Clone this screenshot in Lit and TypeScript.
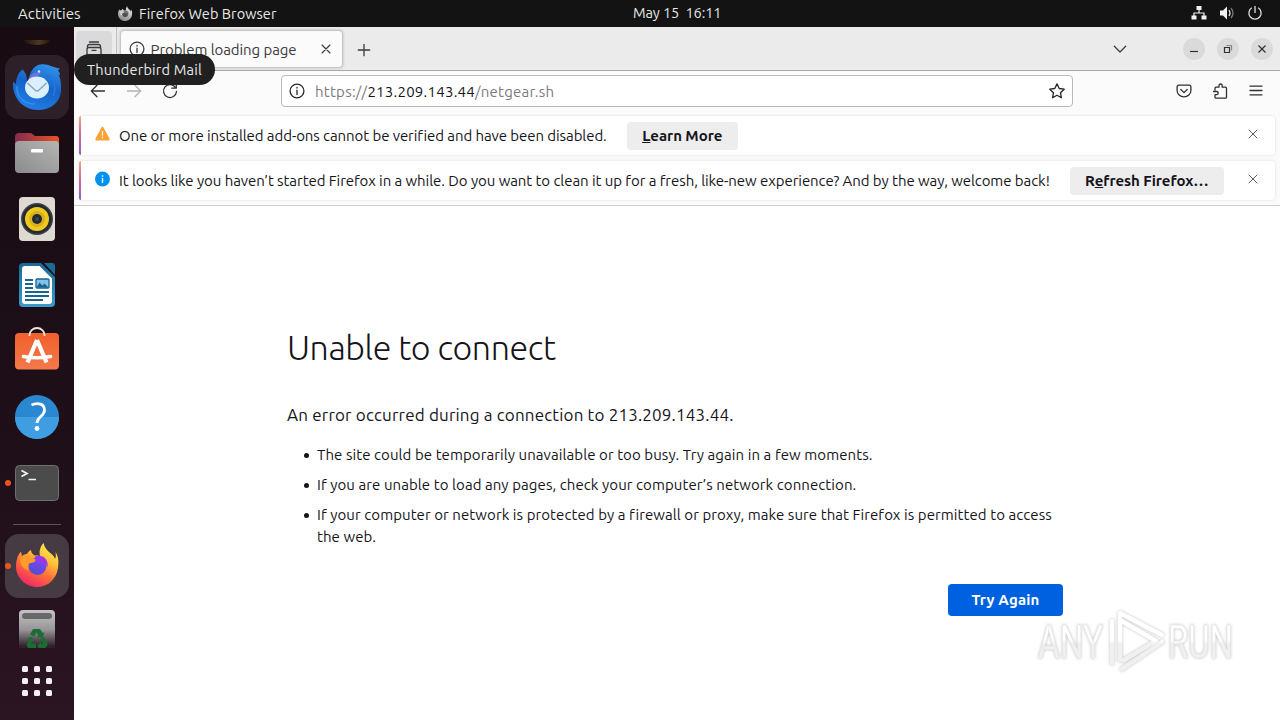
import { LitElement, html, css, svg } from 'lit'
import { customElement, property } from 'lit/decorators.js'

const icons: Record<string, unknown> = {
  tabs: svg`<path d="M3.500 1h9M1.500 7V5.500q0-2 2-2h9q2 0 2 2V7" /><path d="M1 13V8.500q0-2 2-2h10q2 0 2 2V13q0 2-2 2H3q-2 0-2-2z" /><path d="M6 9.300h4" />`,
  info: svg`<circle cx="8" cy="8" r="6.900" /><path d="M8 7.200v4.300M8 4.300v.8" />`,
  close: svg`<path d="M4 4l8 8M12 4l-8 8" />`,
  plus: svg`<path d="M8 2.300v11.400M2.300 8h11.400" />`,
  chevron: svg`<path d="M2.300 5.300L8 11l5.700-5.700" />`,
  back: svg`<path d="M14.500 8H1.500M7 2.300L1.300 8 7 13.700" />`,
  forward: svg`<path d="M1.500 8h13M9 2.300L14.700 8 9 13.700" />`,
  reload: svg`<path d="M13.500 4.500A6.500 6.500 0 1 0 14.500 8.500M14.300 .8v4.400H9.800" />`,
  star: svg`<path d="M8 .9l2.200 4.600 5 .7-3.700 3.500.9 5L8 12.300l-4.400 2.400.9-5L.8 6.200l5-.7z" />`,
  pocket: svg`<path d="M2.800 2.200h10.400a1.700 1.700 0 0 1 1.700 1.700v3.600a6.900 6.400 0 0 1-13.800 0V3.900a1.700 1.700 0 0 1 1.700-1.700zM4.800 6.500L8 9.600l3.200-3.100" />`,
  puzzle: svg`<path d="M3 7V5.200a1 1 0 0 1 1-1h3V2.600a1.600 1.600 0 0 1 3.200 0v1.600h3.300a1 1 0 0 1 1 1v9a1 1 0 0 1-1 1H4a1 1 0 0 1-1-1v-2.500h1.600a1.600 1.600 0 0 0 0-3.200H1.500" />`,
  menu: svg`<path d="M2 3.200h12M2 7.500h12M2 11.800h12" />`,
}

/** Stroked 16px toolbar glyph */
@customElement('line-icon')
export class LineIcon extends LitElement {
  @property({ type: String }) name: string = ''

  static styles = css`
    :host {
      display: block;
      flex: none;
      width: 16px;
      height: 16px;
    }

    svg {
      display: block;
      width: 100%;
      height: 100%;
      fill: none;
      stroke: currentColor;
      stroke-width: var(--icon-stroke, 1.3);
      stroke-linecap: round;
      stroke-linejoin: round;
    }
  `

  render() {
    return html`<svg viewBox="0 0 16 16">${icons[this.name]}</svg>`
  }
}

/** Notification row with a gradient edge */
@customElement('notification-row')
export class NotificationRow extends LitElement {
  @property({ type: String }) kind: string = 'info'

  static styles = css`
    :host {
      display: flex;
      align-items: center;
      position: relative;
      box-sizing: border-box;
      height: 39px;
      padding: 0 14px 0 16px;
      background: #fff;
      border-radius: 3px;
      box-shadow: 0 0 3px rgba(0, 0, 0, 0.12);
      font-size: 15px;
      color: #15141a;
    }

    .edge {
      position: absolute;
      left: 0;
      top: 0;
      bottom: 0;
      width: 2px;
      border-radius: 3px 0 0 3px;
      background: linear-gradient(#f0a878, #cf6a9a 45%, #8b62c0);
    }

    .badge {
      width: 16px;
      height: 16px;
      margin: 0 8px 3px 0;
    }

    line-icon {
      --icon-stroke: 1;
      margin: 0 0 4px auto;
      color: #5b5b66;
    }
  `

  render() {
    return html`
      <div class="edge"></div>
      <svg class="badge" viewBox="0 0 16 16">
        ${this.kind === 'warning'
          ? svg`<path d="M7.500 2L13.500 13.300H1.500z" fill="#f9a335" stroke="#f9a335" stroke-width="2.400" stroke-linejoin="round" /><path d="M7.500 5v4.500M7.500 10.800v1.400" stroke="#fff" stroke-width="1.200" />`
          : svg`<circle cx="7.500" cy="8" r="7.500" fill="#0090ed" /><path d="M7.500 7v5M7.500 4.200v1.500" stroke="#fff" stroke-width="1.400" />`}
      </svg>
      <slot></slot>
      <line-icon name="close"></line-icon>
    `
  }
}

@customElement('app-root')
export class AppRoot extends LitElement {
  static styles = css`
    :host {
      display: flex;
      flex-direction: column;
      position: relative;
      width: 1280px;
      height: 720px;
      overflow: hidden;
      background: #fff;
      color: #15141a;
      font: 15px Ubuntu, 'Noto Sans', 'Open Sans', sans-serif;
      white-space: nowrap;
    }

    .topbar {
      display: flex;
      align-items: center;
      flex: none;
      height: 27px;
      background: #131313;
      color: #e8e8e8;
      font-size: 14.5px;
    }

    .topbar .left {
      display: flex;
      align-items: center;
      box-sizing: border-box;
      width: 633px;
      padding-left: 18px;
    }

    .activities {
      width: 99px;
      font-size: 15px;
      letter-spacing: 0.12px;
    }

    .appname {
      margin-left: 6px;
      letter-spacing: 0.06px;
    }

    .clock {
      margin-bottom: 2px;
      letter-spacing: -0.1px;
      white-space: pre;
    }

    .status {
      display: flex;
      align-items: center;
      gap: 12px;
      margin: 0 17px 1px auto;
    }

    .body {
      display: flex;
      flex: 1;
      min-height: 0;
    }

    .dock {
      display: flex;
      flex-direction: column;
      align-items: center;
      flex: none;
      width: 74px;
      background: linear-gradient(#180b12, #1e0f18 60%, #2b1522);
    }

    .sliver {
      flex: none;
      width: 26px;
      height: 5px;
      margin: 13px 0 10px;
      border-radius: 0 0 13px 13px / 0 0 5px 5px;
      background: linear-gradient(90deg, #271013, #4b3a20 60%, #251310);
    }

    .item {
      display: flex;
      align-items: center;
      justify-content: center;
      position: relative;
      flex: none;
      width: 64px;
      height: 64px;
      margin-bottom: 2px;
      border-radius: 14px;
    }

    .item svg {
      width: 48px;
      height: 48px;
      overflow: visible;
    }

    .item.hover {
      background: #2d2028;
    }

    .item.active {
      background: #463b42;
    }

    .item.running::before {
      content: '';
      position: absolute;
      left: 0;
      top: 29px;
      width: 6px;
      height: 6px;
      border-radius: 50%;
      background: #e95420;
    }

    .separator {
      flex: none;
      width: 48px;
      height: 1px;
      margin: 7px 0 9px;
      background: #5c5157;
    }

    .item.trash {
      align-items: flex-start;
      height: 48px;
      margin: 0;
      overflow: hidden;
      border-radius: 0;
    }

    .item.trash svg {
      flex: none;
      margin-top: 8px;
    }

    .apps {
      display: grid;
      grid-template-columns: repeat(3, 6px);
      gap: 6px;
      margin-top: 18px;
    }

    .apps i {
      height: 6px;
      border-radius: 1.5px;
      background: #f6f0f4;
    }

    .browser {
      display: flex;
      flex-direction: column;
      flex: 1;
      min-width: 0;
    }

    .tabstrip {
      display: flex;
      align-items: center;
      box-sizing: border-box;
      height: 44px;
      flex: none;
      padding: 0 7px 0 2px;
      background: #ebebeb;
      border-bottom: 1px solid #a8a8a8;
      color: #3a3a40;
    }

    .firefox-view {
      display: flex;
      justify-content: center;
      align-items: center;
      width: 36px;
      height: 36px;
      border-radius: 4px;
      background: #dadada;
    }

    .divider {
      width: 1px;
      height: 43px;
      margin: 0 3px 0 4px;
      background: #bebebe;
    }

    .tab {
      display: flex;
      align-items: center;
      box-sizing: border-box;
      width: 223px;
      height: 38px;
      padding: 0 8px;
      border: 1px solid #c6c6c8;
      border-radius: 4px;
      background: #fbfbfb;
      box-shadow: 0 0 3px rgba(0, 0, 0, 0.2);
      font-size: 15px;
    }

    .tab span {
      flex: 1;
      margin: 2px 0 0 5.5px;
      letter-spacing: -0.08px;
    }

    .tab line-icon:last-child {
      --icon-stroke: 1.1;
    }

    .tab + line-icon {
      margin: 2px 0 0 13px;
    }

    .spacer {
      flex: 1;
    }

    .controls {
      display: flex;
      gap: 12px;
      margin-left: 55px;
    }

    .controls span {
      display: flex;
      align-items: center;
      justify-content: center;
      width: 22px;
      height: 22px;
      border-radius: 50%;
      background: #dadada;
    }

    .controls svg {
      width: 10px;
      height: 10px;
      fill: none;
      stroke: #303030;
      stroke-width: 1.2;
    }

    .navbar {
      display: flex;
      align-items: center;
      flex: none;
      box-sizing: border-box;
      height: 42px;
      padding: 0 16px 2px;
      background: #fbfbfb;
      color: #303036;
    }

    .navbar .back,
    .navbar .forward {
      margin-right: 20px;
    }

    .navbar .forward {
      color: #b4b4b6;
    }

    .urlbar {
      display: flex;
      align-items: center;
      box-sizing: border-box;
      width: 792px;
      height: 32px;
      margin: 0 103px;
      padding: 0 7px;
      border: 1px solid #bababd;
      border-radius: 4px;
      background: #fff;
      color: #7b7b80;
      font-size: 15px;
    }

    .urlbar line-icon {
      color: #25252b;
    }

    .urlbar span {
      flex: 1;
      margin-left: 10px;
      letter-spacing: 0.25px;
    }

    .urlbar b {
      font-weight: 400;
      color: #15141a;
    }

    .right {
      display: flex;
      gap: 20px;
    }

    .notifications {
      display: flex;
      flex-direction: column;
      gap: 6px;
      flex: none;
      box-sizing: border-box;
      height: 93px;
      padding: 3px 5px 0;
      background: #fbfbfb;
      border-bottom: 1px solid #cbcbcd;
    }

    .warn-text {
      letter-spacing: -0.078px;
    }

    .info-text {
      letter-spacing: -0.062px;
    }

    .action {
      display: flex;
      align-items: center;
      justify-content: center;
      height: 28px;
      margin-left: 20px;
      border-radius: 4px;
      background: #ededee;
      font-weight: 700;
      white-space: pre;
    }

    .learn {
      width: 111px;
      letter-spacing: -0.05px;
    }

    .refresh {
      width: 154px;
      letter-spacing: -0.05px;
    }

    .page {
      display: flex;
      flex-direction: column;
      flex: 1;
      width: 776px;
      padding: 118px 0 0 213px;
    }

    h1 {
      margin: 0;
      font-size: 34px;
      font-weight: 300;
      line-height: 46px;
      letter-spacing: -0.43px;
    }

    p {
      margin: 33px 0 0;
      font-size: 17px;
      line-height: 24px;
      letter-spacing: 0.18px;
    }

    ul {
      margin: 17px 0 0;
      padding-left: 30px;
      line-height: 22px;
      letter-spacing: 0.078px;
      list-style: none;
    }

    li {
      position: relative;
      margin-bottom: 8px;
    }

    li::before {
      content: '';
      position: absolute;
      left: -13px;
      top: 9px;
      width: 5px;
      height: 5px;
      border-radius: 50%;
      background: #15141a;
    }

    .retry {
      align-self: flex-end;
      width: 115px;
      margin-top: 28px;
      border-radius: 4px;
      background: #0061e0;
      color: #fff;
      font-weight: 700;
      line-height: 32px;
      letter-spacing: 0.15px;
      text-align: center;
    }

    .tooltip {
      position: absolute;
      left: 74px;
      top: 54px;
      box-sizing: border-box;
      width: 141px;
      height: 31px;
      border-radius: 16px;
      background: #202020;
      color: #e9e9e9;
      font-size: 14.5px;
      line-height: 31px;
      letter-spacing: 0.22px;
      text-align: center;
    }

    .watermark {
      position: absolute;
      left: 1032px;
      top: 604px;
      width: 240px;
      height: 72px;
      filter: drop-shadow(0 0 1.5px rgba(0, 0, 0, 0.25));
    }
  `

  renderFirefox(id: string, mono = false) {
    return svg`
      <defs>
        <linearGradient id="${id}-body" x1=".85" y1="0" x2=".3" y2="1">
          <stop offset="0" stop-color=${mono ? '#e5e5e5' : '#fff44f'} />
          <stop offset=".35" stop-color=${mono ? '#ccc' : '#ffc03a'} />
          <stop offset=".65" stop-color=${mono ? '#aaa' : '#ff6a3a'} />
          <stop offset="1" stop-color=${mono ? '#888' : '#f0256a'} />
        </linearGradient>
        <linearGradient id="${id}-globe" x1=".8" y1="0" x2=".2" y2="1">
          <stop offset="0" stop-color=${mono ? '#666' : '#8b3ff5'} />
          <stop offset="1" stop-color=${mono ? '#444' : '#4b50d0'} />
        </linearGradient>
      </defs>
      <path fill="url(#${id}-body)" d="M30.500 1c1 5 4 8 8 11 2 2 3 3 3.500 5 1-2 1-4 .5-7 3 5 3.500 9 2.500 16-1.500 11-10 19-21 19S3 36 3 24.500C3 18 4.500 13 8 9.500L9 14q2-2 5-2c1-2 2-3 4-4 0 3 2 4.500 4 5.500 2 0 3 0 5 .5-1-5 0-9 3.500-13z" />
      <circle cx="24.500" cy="24" r="9" fill="url(#${id}-globe)" />
      <path fill=${mono ? '#ccc' : '#ff9c29'} d="M7 17q3-4 8-3l7 3c1 2 0 3-2 3.500l-4 1c-1 2-1 4 0 7-5-1-9-5-9-11.500z" />
      <path fill=${mono ? '#777' : '#9838ed'} d="M22 14.500c8-3 14 3 12.500 11-1-4-3.500-5.500-7-5.500l-4-.5z" />
    `
  }

  renderDock() {
    return html`
      <div class="dock">
        <div class="sliver"></div>
        <div class="item hover">
          <svg viewBox="0 0 48 48">
            <defs>
              <linearGradient id="bird" x1=".7" y1="0" x2=".3" y2="1">
                <stop offset="0" stop-color="#2f8fea" />
                <stop offset=".45" stop-color="#1663c8" />
                <stop offset="1" stop-color="#217fe6" />
              </linearGradient>
            </defs>
            <path fill="url(#bird)" d="M16 15C18 6 23 1.300 29 1.300 36 1 41 5 47 5.500L45 7.500q2 2 2 5l-1.500-1c3 6 2.500 12 2.500 17C47 40 37 47 25 47 10 47-1 35 0 18.500L3 21C3 14 6 9 9.700 6.500 13 10 15 15 13.500 22z" />
            <path d="M4 23c-1 10 6 18 18 18" fill="none" stroke="#3291ee" stroke-width="1.400" />
            <path fill="#6a76dc" d="M16 15c3-5 7-7 12-5-2 3-5 4-8 5-2 1-3 4-6 7z" />
            <path d="M34 12c7 4 10 12 6 21" fill="none" stroke="#2476d8" stroke-width="2" />
            <circle cx="26" cy="8.500" r="1.200" fill="#d8efff" />
            <ellipse cx="24" cy="24.500" rx="12" ry="11" fill="#dceffc" />
            <path d="M14.500 20l7.500 7q2 2 4 0l7.500-7" fill="none" stroke="#8aa6bd" stroke-width="1.500" />
          </svg>
        </div>
        <div class="item">
          <svg viewBox="0 0 48 48">
            <defs>
              <linearGradient id="folder"><stop stop-color="#822b50" /><stop offset="1" stop-color="#e95420" /></linearGradient>
              <linearGradient id="drawer" x1="0" y1="1" x2="1" y2="0"><stop stop-color="#8b8b8b" /><stop offset="1" stop-color="#b5b5b5" /></linearGradient>
            </defs>
            <path fill="url(#folder)" d="M2 8q0-4 4-4h12l4 3h21q3 0 3 3v15H2z" />
            <rect x="2" y="12" width="44" height="32" rx="4" fill="url(#drawer)" />
            <rect x="18" y="20" width="12" height="3.500" rx="1" fill="#fff" />
          </svg>
        </div>
        <div class="item">
          <svg viewBox="0 0 48 48">
            <rect x="6" y="2" width="36" height="44" rx="4" fill="#dedad2" />
            <circle cx="24" cy="24" r="16" fill="#3b4147" />
            <circle cx="24" cy="24" r="14.500" fill="#252a30" />
            <circle cx="24" cy="24" r="12" fill="#f0c91f" />
            <circle cx="24" cy="24" r="8" fill="#d8b11c" />
            <circle cx="24" cy="24" r="5" fill="#222831" />
            <circle cx="24" cy="24" r="2" fill="#394552" />
          </svg>
        </div>
        <div class="item">
          <svg viewBox="0 0 48 48">
            <defs>
              <linearGradient id="writer" x2="0" y2="1"><stop stop-color="#166a96" /><stop offset="1" stop-color="#3a9acb" /></linearGradient>
            </defs>
            <path fill="url(#writer)" d="M10 2h18l14 14v26q0 4-4 4H10q-4 0-4-4V6q0-4 4-4z" />
            <path fill="#1b6b92" d="M31 2h8q3 0 3 3v9z" />
            <path fill="#fff" d="M12 5h14.500L39 17.500V40q0 3-3 3H12q-3 0-3-3V8q0-3 3-3z" />
            <path stroke="#17648f" stroke-width="1.800" d="M12 19h8M12 23h8M12 27h8M12 31h24M12 35h24M12 39h18" />
            <rect x="23" y="18" width="13" height="9" rx="1" fill="#81c4e8" stroke="#17648f" stroke-width="1.300" />
            <path fill="#17648f" d="M23.500 26.500l3-5 3 3 2-2 4 4z" />
          </svg>
        </div>
        <div class="item">
          <svg viewBox="0 0 48 48">
            <defs>
              <linearGradient id="bag" x2="0" y2="1"><stop stop-color="#f0602c" /><stop offset="1" stop-color="#f4794a" /></linearGradient>
            </defs>
            <rect x="2" y="6" width="44" height="36.500" rx="4" fill="url(#bag)" />
            <path d="M16.500 9V8a7.500 7 0 0 1 15 0V9" fill="none" stroke="#f4e6dc" stroke-width="1.800" />
            <path d="M24 13L14.500 35.500M24 13l9.500 22.500" fill="none" stroke="#fff" stroke-width="4.200" stroke-linejoin="round" />
            <path d="M10.500 29.500q13.500 2.500 27 0" fill="none" stroke="#fff" stroke-width="3.600" stroke-linecap="round" />
          </svg>
        </div>
        <div class="item">
          <svg viewBox="0 0 48 48">
            <circle cx="24" cy="24" r="22" fill="#2a88d0" />
            <path fill="#3f9ee2" d="M2 24h44a22 22 0 0 1-44 0z" />
            <path d="M18.500 12c6.500-3 13-1 13 5 0 6.500-7.500 6.500-7.500 13" fill="none" stroke="#fff" stroke-width="2.800" />
            <circle cx="24" cy="35.500" r="2.400" fill="#fff" />
          </svg>
        </div>
        <div class="item running">
          <svg viewBox="0 0 48 48">
            <rect x="2.500" y="6.500" width="43" height="35" rx="4" fill="#4b4b4b" stroke="#6f6f6f" />
            <path d="M8.500 11.500l5.500 3-5.500 3M15.500 20.500H23" fill="none" stroke="#f4f4f4" stroke-width="1.700" />
          </svg>
        </div>
        <div class="separator"></div>
        <div class="item active running"><svg viewBox="0 0 48 48">${this.renderFirefox('dock')}</svg></div>
        <div class="item trash">
          <svg viewBox="0 0 48 48">
            <defs>
              <linearGradient id="bin" x2="0" y2="1"><stop stop-color="#c4c4c4" /><stop offset=".45" stop-color="#989598" /><stop offset=".82" stop-color="#30222b" /></linearGradient>
            </defs>
            <rect x="6" y="2" width="36" height="44" rx="4" fill="url(#bin)" />
            <rect x="9" y="5" width="30" height="6" rx="3" fill="#686868" />
            <path fill="#1b6e33" d="M20 21h7l2.500 4 2-1-2 6-6-1 2-1-2-3.500-2.500 4-4-2zM31 29l3 5q1 2 0 4l-2 2h-4v2.500L24 38l4-4v2h2l-2.500-4.500zM14 30l5-1 2 5-2-1-1 2.500h5V40h-7q-3-1-2-4l2-3.500z" />
          </svg>
        </div>
        <div class="apps">${Array.from({ length: 9 }, () => html`<i></i>`)}</div>
      </div>
    `
  }

  renderTopBar() {
    return html`
      <div class="topbar">
        <div class="left">
          <span class="activities">Activities</span>
          <svg width="16" height="16" viewBox="0 0 48 48">${this.renderFirefox('bar', true)}</svg>
          <span class="appname">Firefox Web Browser</span>
        </div>
        <span class="clock">May 15  16:11</span>
        <div class="status">
          <svg width="16" height="16" viewBox="0 0 16 16" fill="#f0f0f0">
            <path d="M5.500 1h5v4h-5zM.5 10.500h5v4h-5zM10.500 10.500h5v4h-5z" />
            <path d="M8 5v3M3 11V8h10v3" fill="none" stroke="#f0f0f0" stroke-width="1.200" />
          </svg>
          <svg width="16" height="16" viewBox="0 0 16 16" fill="#f0f0f0">
            <path d="M1 5.500h3L8 1.500v13l-4-4H1z" />
            <path d="M10 5q2 3 0 6" fill="none" stroke="#ddd" stroke-width="1.300" />
            <path d="M12 3q4 5 0 10" fill="none" stroke="#777" stroke-width="1.300" />
          </svg>
          <svg width="16" height="16" viewBox="0 0 16 16" fill="none" stroke="#e0e0e0" stroke-width="1.300">
            <path d="M8 1v7M4.800 2.800a6.100 6.100 0 1 0 6.400 0" />
          </svg>
        </div>
      </div>
    `
  }

  renderBrowser() {
    return html`
      <div class="browser">
        <div class="tabstrip">
          <div class="firefox-view"><line-icon name="tabs"></line-icon></div>
          <div class="divider"></div>
          <div class="tab">
            <line-icon name="info"></line-icon>
            <span>Problem loading page</span>
            <line-icon name="close"></line-icon>
          </div>
          <line-icon name="plus"></line-icon>
          <div class="spacer"></div>
          <line-icon name="chevron"></line-icon>
          <div class="controls">
            <span><svg viewBox="0 0 10 10"><path d="M1 7.500h8" /></svg></span>
            <span><svg viewBox="0 0 10 10"><path d="M1.500 3.500h5v5h-5z" /><path d="M3.500 1.500h5v5" stroke="#888" /></svg></span>
            <span><svg viewBox="0 0 10 10"><path d="M1.500 1.500l7 7M8.500 1.500l-7 7" /></svg></span>
          </div>
        </div>
        <div class="navbar">
          <line-icon class="back" name="back"></line-icon>
          <line-icon class="forward" name="forward"></line-icon>
          <line-icon name="reload"></line-icon>
          <div class="urlbar">
            <line-icon name="info"></line-icon>
            <span>https://<b>213.209.143.44</b>/netgear.sh</span>
            <line-icon name="star"></line-icon>
          </div>
          <div class="right">
            <line-icon name="pocket"></line-icon>
            <line-icon name="puzzle"></line-icon>
            <line-icon name="menu"></line-icon>
          </div>
        </div>
        <div class="notifications">
          <notification-row kind="warning">
            <span class="warn-text">One or more installed add-ons cannot be verified and have been disabled.</span>
            <span class="action learn"><u>L</u>earn More</span>
          </notification-row>
          <notification-row>
            <span class="info-text">It looks like you haven’t started Firefox in a while. Do you want to clean it up for a fresh, like-new experience? And by the way, welcome back!</span>
            <span class="action refresh">R<u>e</u>fresh Firefox…</span>
          </notification-row>
        </div>
        <div class="page">
          <h1>Unable to connect</h1>
          <p>An error occurred during a connection to 213.209.143.44.</p>
          <ul>
            <li>The site could be temporarily unavailable or too busy. Try again in a few moments.</li>
            <li>If you are unable to load any pages, check your computer’s network connection.</li>
            <li>If your computer or network is protected by a firewall or proxy, make sure that Firefox is permitted to access<br />the web.</li>
          </ul>
          <div class="retry">Try Again</div>
        </div>
      </div>
    `
  }

  render() {
    return html`
      ${this.renderTopBar()}
      <div class="body">${this.renderDock()} ${this.renderBrowser()}</div>
      <div class="tooltip">Thunderbird Mail</div>
      <svg class="watermark" viewBox="0 0 240 72">
        <defs>
          <linearGradient id="mark" gradientUnits="userSpaceOnUse" x1="0" y1="36" x2="0" y2="40">
            <stop stop-color="#fff" />
            <stop offset="1" stop-color="#f0f0f0" />
          </linearGradient>
        </defs>
        <g font-family="Roboto, sans-serif" font-size="47" fill="url(#mark)" stroke="#e8e8e8" stroke-width=".5">
          <text x="6" y="54" textLength="65" lengthAdjust="spacingAndGlyphs">ANY</text>
          <text x="136" y="54" textLength="65" lengthAdjust="spacingAndGlyphs">RUN</text>
        </g>
        <g fill="none" stroke="url(#mark)" stroke-width="4.500" stroke-linejoin="round" stroke-linecap="round">
          <path d="M88 56V9l42 22M88 16l36 21-32 19" />
          <path d="M80 17v42M90 65l40-27" />
        </g>
      </svg>
    `
  }
}

declare global {
  interface HTMLElementTagNameMap {
    'app-root': AppRoot
    'line-icon': LineIcon
    'notification-row': NotificationRow
  }
}
